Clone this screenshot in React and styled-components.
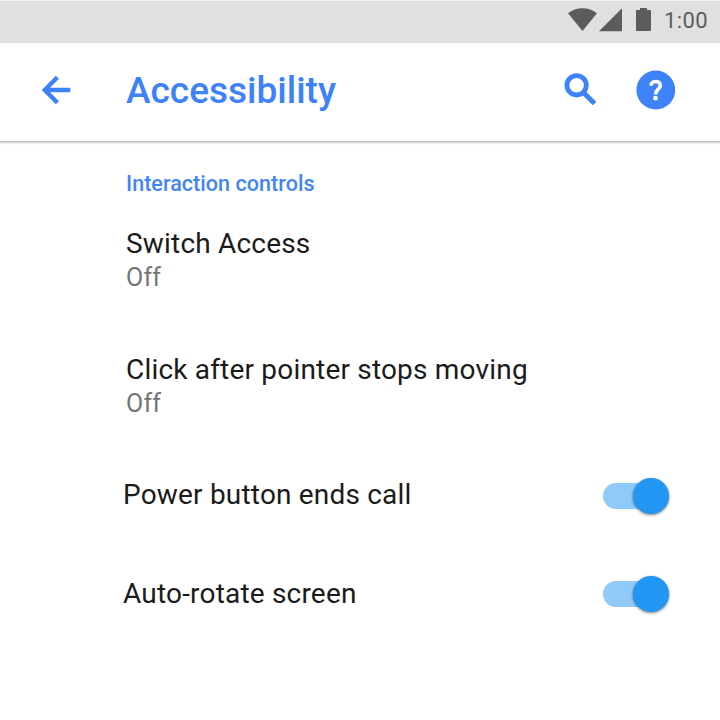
import React from "react";
import styled, { createGlobalStyle } from "styled-components";

const GlobalStyle = createGlobalStyle`
  * { box-sizing: border-box; }
  body { margin: 0; background: #fff; font-family: Roboto, sans-serif; }
`;

const Screen = styled.main`
  width: 720px;
  height: 720px;
  overflow: hidden;
  background: #fff;
`;

const StatusBar = styled.div`
  display: flex;
  align-items: flex-start;
  height: 43px;
  padding: 7px 0 0 568px;
  background: #e0e0e0;
  border-top: 1px solid #f2f2f2;
  color: #5c5c5c;
`;

const StatusIcon = styled.svg`
  flex: none;
  display: block;
  fill: #5c5c5c;
  margin-right: ${(p) => p.$gap}px;
`;

const Clock = styled.span`
  font-size: 22px;
  line-height: 26px;
  font-weight: 450;
  letter-spacing: 0.4px;
  white-space: nowrap;
`;

const AppBar = styled.header`
  display: flex;
  align-items: center;
  height: 99px;
  padding: 0 45px 5px 41px;
  border-bottom: 1px solid #bdbdbd;
  box-shadow: 0 1px 2px rgba(0, 0, 0, 0.2);
  color: #3d82f8;
`;

const IconButton = styled.button`
  display: block;
  flex: none;
  padding: 0;
  border: 0;
  background: none;
  color: inherit;
  margin-right: ${(p) => p.$gap || 0}px;
  svg { display: block; }
`;

const Title = styled.h1`
  flex: 1;
  margin: 0;
  padding-top: 2px;
  font-size: 37px;
  line-height: 44px;
  font-weight: 500;
  letter-spacing: 0;
`;

const Settings = styled.section`
  padding: 30px 51px 0 126px;
`;

const SectionTitle = styled.h2`
  margin: 0 0 31px;
  font-size: 21.5px;
  line-height: 24px;
  font-weight: 500;
  letter-spacing: 0.05px;
  color: #4285f4;
`;

const Item = styled.div`
  height: 126px;
`;

const ToggleRow = styled.div`
  display: flex;
  align-items: flex-start;
  justify-content: space-between;
  height: 98px;
  margin-left: -3px;
  margin-top: ${(p) => (p.$first ? -1 : 0)}px;
`;

const Label = styled.div`
  padding-top: ${(p) => p.$offset || 0}px;
  font-size: 28px;
  line-height: 34px;
  letter-spacing: 0.19px;
  color: #1b1b1b;
  white-space: nowrap;
`;

const Value = styled.div`
  padding-top: 1px;
  font-size: 25px;
  line-height: 32px;
  letter-spacing: 0.2px;
  color: #757575;
`;

const Track = styled.div`
  display: flex;
  align-items: center;
  justify-content: flex-end;
  width: 66px;
  height: 26px;
  margin-top: 5px;
  border-radius: 13px;
  background: linear-gradient(#90caf9, #90caf9) left / 52px 100% no-repeat;
`;

const Thumb = styled.div`
  flex: none;
  width: 36px;
  height: 36px;
  border-radius: 50%;
  background: #2196f3;
  box-shadow: 0 1px 3px rgba(0, 0, 0, 0.5);
`;

function Toggle({ label }) {
  return (
    <Track role="switch" aria-checked="true" aria-label={label}>
      <Thumb />
    </Track>
  );
}

export default function App() {
  return (
    <>
      <GlobalStyle />
      <Screen>
        <StatusBar>
          <StatusIcon $gap={2} width="29" height="24" viewBox="0 0 29 24">
            <path d="M0 5.3C8-1.6 21-1.6 29 5.3L14.5 23Z" />
          </StatusIcon>
          <StatusIcon $gap={13} width="24" height="24" viewBox="0 0 24 24">
            <path d="M0 23.2 23 .2V23.2Z" />
          </StatusIcon>
          <StatusIcon $gap={12} width="16" height="24" viewBox="0 0 16 24">
            <path d="M4 0h7v2h3.2q.8 0 .8.8v19.4q0 .8-.8.8H.8q-.8 0-.8-.8V2.8Q0 2 .8 2H4Z" />
          </StatusIcon>
          <Clock>1:00</Clock>
        </StatusBar>
        <AppBar>
          <IconButton $gap={55} aria-label="Back">
            <svg width="30" height="30" viewBox="0 0 30 30" fill="none" stroke="currentColor" strokeWidth="4.4">
              <path d="M29.3 15H4M16.4 2.2 3.8 15 16.4 27.8" />
            </svg>
          </IconButton>
          <Title>Accessibility</Title>
          <IconButton $gap={40} aria-label="Search">
            <svg width="32" height="34" viewBox="0 0 32 34" fill="none" stroke="currentColor">
              <circle cx="12.6" cy="12.3" r="9.7" strokeWidth="4.8" />
              <path d="M19.4 19.4 30.6 30.6" strokeWidth="5" />
            </svg>
          </IconButton>
          <IconButton aria-label="Help">
            <svg width="39" height="40" viewBox="0 0 39 40">
              <circle cx="19.8" cy="20" r="19.4" fill="currentColor" />
              <path d="M15.1 15.7c0-2.7 1.9-4.2 4.5-4.2s4.7 1.4 4.7 4c0 3.8-4.7 3.8-4.7 9" fill="none" stroke="#fff" strokeWidth="3.7" />
              <circle cx="19.5" cy="28.2" r="2.4" fill="#fff" />
            </svg>
          </IconButton>
        </AppBar>
        <Settings>
          <SectionTitle>Interaction controls</SectionTitle>
          <Item>
            <Label>Switch Access</Label>
            <Value>Off</Value>
          </Item>
          <Item>
            <Label>Click after pointer stops moving</Label>
            <Value>Off</Value>
          </Item>
          <ToggleRow $first>
            <Label>Power button ends call</Label>
            <Toggle label="Power button ends call" />
          </ToggleRow>
          <ToggleRow>
            <Label $offset={1}>Auto-rotate screen</Label>
            <Toggle label="Auto-rotate screen" />
          </ToggleRow>
        </Settings>
      </Screen>
    </>
  );
}
